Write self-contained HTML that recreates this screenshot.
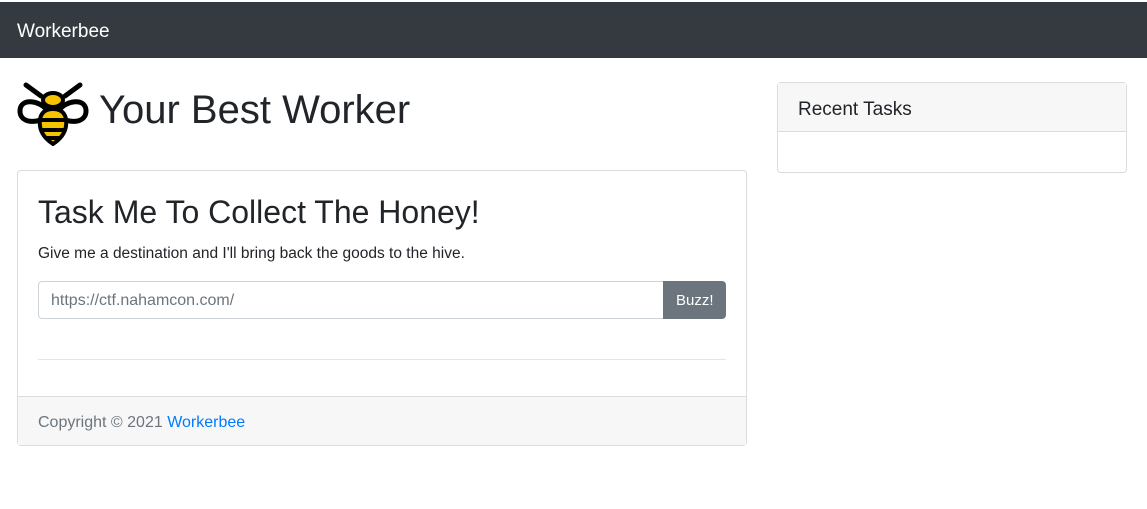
<!DOCTYPE html>
<html><head><meta charset="utf-8"><style>
*{box-sizing:border-box;margin:0;padding:0}
body{width:1147px;height:509px;background:#fff;font-family:"Liberation Sans",sans-serif;color:#212529;position:relative;overflow:hidden}
.nav{position:absolute;top:2px;left:0;width:1147px;height:56px;background:#343a40;color:#fff;font-size:19px;padding:19px 0 0 17px}
.abs{position:absolute}
h1{font-weight:500;font-size:40px;position:absolute;left:99px;top:88px}
.card{position:absolute;border:1px solid #dcdcdc;border-radius:4px}
</style></head><body>
<div class="nav">Workerbee</div>
<svg class="abs" style="left:17px;top:82px" width="72" height="64" viewBox="0 0 72 64">
<g stroke="#000" stroke-width="5" fill="none" stroke-linecap="round">
<line x1="9" y1="3" x2="24" y2="14"/><line x1="63" y1="3" x2="48" y2="14"/>
<path d="M30 28 C22 18 4 16 3 28 C2 42 22 42 30 34"/>
<path d="M42 28 C50 18 68 16 69 28 C70 42 50 42 42 34"/>
</g>
<ellipse cx="36" cy="18" rx="10" ry="7" fill="#f5c400" stroke="#000" stroke-width="4"/>
<path d="M36 27 C24 27 22 36 23 44 C24 52 30 58 36 62 C42 58 48 52 49 44 C50 36 48 27 36 27Z" fill="#f5c400" stroke="#000" stroke-width="4"/>
<g stroke="#000" stroke-width="4"><line x1="23" y1="38" x2="49" y2="38"/><line x1="24" y1="48" x2="48" y2="48"/><line x1="29" y1="56" x2="43" y2="56"/></g>
</svg>
<h1>Your Best Worker</h1>
<div class="card" style="left:17px;top:170px;width:730px;height:276px">
<div class="abs" style="left:20px;top:23px;font-size:32px;font-weight:500">Task Me To Collect The Honey!</div>
<div class="abs" style="left:20px;top:74px;font-size:15.5px">Give me a destination and I'll bring back the goods to the hive.</div>
<div class="abs" style="left:20px;top:110px;width:626px;height:38px;border:1px solid #ced4da;border-radius:4px 0 0 4px;color:#6c757d;font-size:16px;padding:10px 12px">https://ctf.nahamcon.com/</div>
<div class="abs" style="left:645px;top:110px;width:63px;height:38px;background:#6c757d;border-radius:0 4px 4px 0;color:#fff;font-size:15px;padding:11px 0 0 13px">Buzz!</div>
<div class="abs" style="left:20px;top:188px;width:688px;border-top:1px solid #e5e5e5"></div>
<div class="abs" style="left:0;top:225px;width:728px;height:49px;background:#f7f7f7;border-top:1px solid #dcdcdc;font-size:16px;color:#6c757d;padding:17px 20px">Copyright © 2021 <span style="color:#007bff">Workerbee</span></div>
</div>
<div class="card" style="left:777px;top:82px;width:350px;height:91px">
<div style="height:49px;background:#f7f7f7;border-bottom:1px solid #dcdcdc;font-size:19px;font-weight:500;padding:16px 20px">Recent Tasks</div>
</div>
</body></html>
